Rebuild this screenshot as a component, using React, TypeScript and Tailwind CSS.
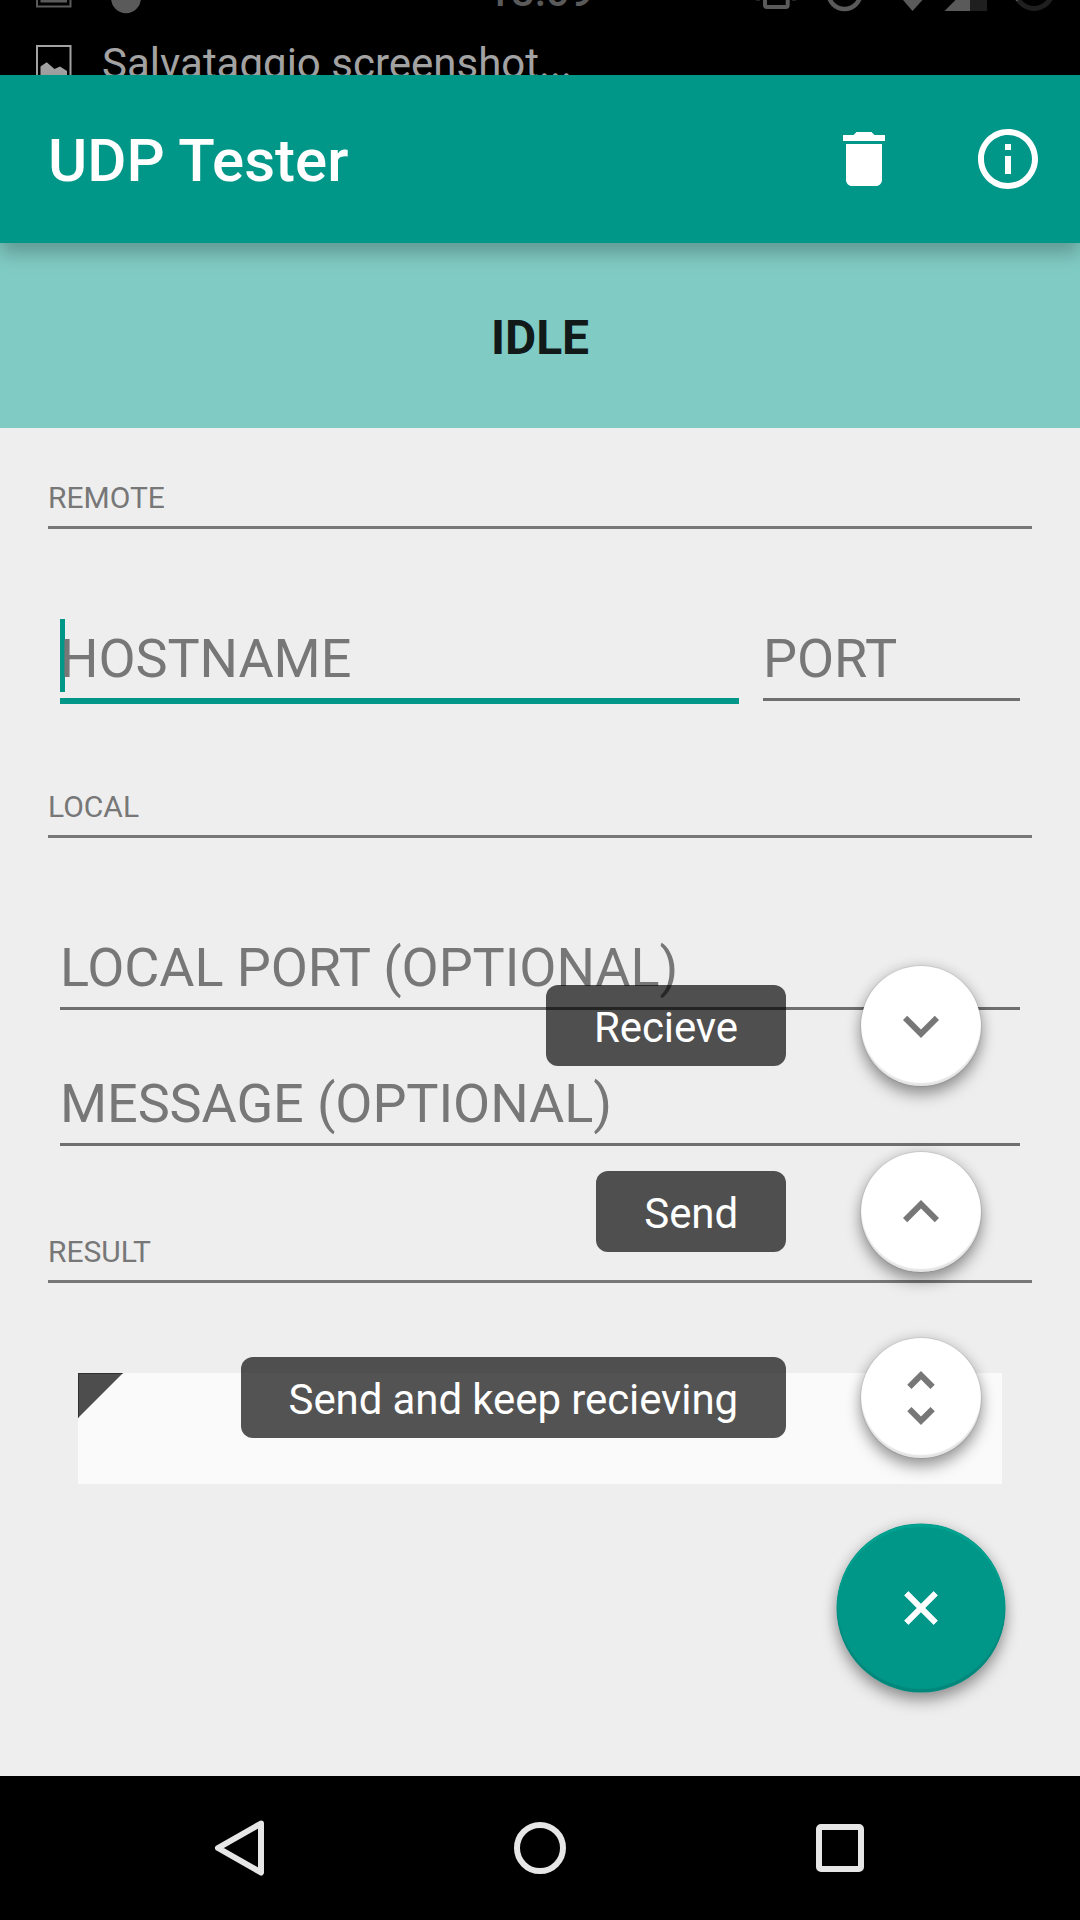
import type { ReactNode } from "react";

function StatusBar() {
  return (
    <div className="relative h-[75px] shrink-0 overflow-hidden bg-black">
      <svg className="absolute inset-0" width="1080" height="75" viewBox="0 0 1080 75">
        <g fill="#5a5a5a">
          <path d="M36 0h2v5.5h31.500V0h2v7.500H36z" />
          <rect x="40.500" y="0" width="26.500" height="2.500" />
          <ellipse cx="126" cy="-2" rx="15" ry="15.300" />
          <rect x="756" y="0" width="4" height="1" opacity="0.4" />
          <rect x="792" y="0" width="4" height="1" opacity="0.4" />
          <path d="M903 0h19.500L912.500 11z" />
          <path d="M944.500 11L955.500 0H970v11z" />
        </g>
        <path d="M765 -6V5a2 2 0 0 0 2 2h18.700a2 2 0 0 0 2 -2V-6" fill="none" stroke="#5a5a5a" strokeWidth="4" />
        <circle cx="844.500" cy="-7" r="16" fill="none" stroke="#5a5a5a" strokeWidth="4.500" />
        <rect x="970" y="0" width="17" height="11" fill="#1f1f1f" />
        <circle cx="1034" cy="-10" r="18.500" fill="none" stroke="#1f1f1f" strokeWidth="5" />
        <path d="M1015.500 0h3l-1.500 1.500z" fill="#5a5a5a" />
        <rect x="37" y="46" width="33.500" height="40" fill="none" stroke="#a3a3a3" strokeWidth="2" />
        <path d="M40.500 66.500L46.700 62.300 54.500 69 60 66.500 67 71V76H40.500z" fill="#a3a3a3" />
      </svg>
      <span className="absolute left-[487px] top-[-33px] text-[42px] leading-[50px] font-medium text-[#5a5a5a]">18:09</span>
      <span className="absolute left-[102px] top-[39px] text-[42px] leading-[50px] whitespace-nowrap text-[#a3a3a3]">
        Salvataggio screenshot...
      </span>
    </div>
  );
}

function MaterialIcon({ d, className }: { d: string; className: string }) {
  return (
    <svg className={className} width="72" height="72" viewBox="0 0 24 24" fill="currentColor">
      <path d={d} />
    </svg>
  );
}

function SectionHeader({ children, className }: { children: ReactNode; className: string }) {
  return (
    <h2 className={`mx-12 border-b-3 border-[#777777] pb-2 text-[30px] leading-10 text-[#777777] ${className}`}>
      {children}
    </h2>
  );
}

function Field({ label, className }: { label: string; className: string }) {
  return (
    <div
      className={`border-[#6f6f6f] text-[54px] leading-[79px] tracking-[-0.1px] whitespace-nowrap text-[#777777] ${className}`}
    >
      {label}
    </div>
  );
}

const actions = [
  { label: "Recieve", icon: "M16.590 8.590L12 13.170 7.410 8.590 6 10l6 6 6-6z" },
  { label: "Send", icon: "M12 8l-6 6 1.410 1.410L12 10.830l4.590 4.580L18 14z" },
  {
    label: "Send and keep recieving",
    icon: "M12 5.830L15.170 9l1.410-1.410L12 3 7.410 7.590 8.830 9 12 5.830zm0 12.340L8.830 15l-1.410 1.410L12 21l4.590-4.590L15.170 15 12 18.170z",
  },
];

function FloatingMenu() {
  return (
    <div className="absolute right-[75px] bottom-[228px] flex flex-col items-end">
      {actions.map((a) => (
        <div key={a.label} className="mb-[66px] flex h-[120px] items-center gap-[75px] pr-6">
          <span className="mb-px flex h-[81px] items-center rounded-[12px] bg-black/67 px-12 text-[42px] leading-[50px] tracking-[-0.100px] whitespace-nowrap text-white">
            <span className="mt-1">{a.label}</span>
          </span>
          <button
            aria-label={a.label}
            className="flex size-[120px] items-center justify-center rounded-full bg-white text-[#777777] shadow-[0_0_0_1px_rgba(0,0,0,0.07),0_9px_15px_rgba(0,0,0,0.34),0_0_14px_rgba(0,0,0,0.14),inset_0_-3px_1px_rgba(0,0,0,0.10)]"
          >
            <MaterialIcon d={a.icon} className="size-[72px]" />
          </button>
        </div>
      ))}
      <button
        aria-label="Close"
        className="flex size-[168px] items-center justify-center rounded-full bg-[#009688] text-white shadow-[0_0_0_0.500px_#009688,0_9px_15px_rgba(0,0,0,0.34),0_0_14px_rgba(0,0,0,0.14),inset_0_-3px_1px_rgba(0,0,0,0.10),inset_0_3px_1px_rgba(0,170,150,0.6)]"
      >
        <svg width="42" height="42" viewBox="0 0 42 42" fill="currentColor" className="rotate-45">
          <path d="M18 0h6v18h18v6H24v18h-6V24H0v-6h18z" />
        </svg>
      </button>
    </div>
  );
}

export default function App() {
  return (
    <div
      className="relative flex h-[1920px] w-[1080px] flex-col overflow-hidden bg-[#eeeeee]"
      style={{ fontFamily: "Roboto, sans-serif" }}
    >
      <StatusBar />
      <header className="relative z-10 flex h-[168px] shrink-0 items-center bg-[#009688] pr-9 pl-12 text-white shadow-[0_10px_18px_rgba(0,0,0,0.25)]">
        <h1 className="mt-1 flex-1 text-[60px] leading-[72px] font-medium">UDP Tester</h1>
        <MaterialIcon
          className="mr-[72px] size-[72px]"
          d="M6 19c0 1.100.9 2 2 2h8c1.100 0 2-.9 2-2V7H6v12zM19 4h-3.500l-1-1h-5l-1 1H5v2h14V4z"
        />
        <MaterialIcon
          className="size-[72px]"
          d="M11 17h2v-6h-2v6zm1-15C6.480 2 2 6.480 2 12s4.480 10 10 10 10-4.480 10-10S17.520 2 12 2zm0 18c-4.410 0-8-3.590-8-8s3.590-8 8-8 8 3.590 8 8-3.590 8-8 8zM11 9h2V7h-2v2z"
        />
      </header>
      <div className="flex h-[185px] shrink-0 items-center justify-center bg-[#80cbc4] pt-1 text-[48px] leading-[56px] font-bold text-[#111a19]">
        IDLE
      </div>
      <main className="h-[1348px] shrink-0">
        <SectionHeader className="mt-[50px]">REMOTE</SectionHeader>
        <div className="mx-[60px] mt-[90px] flex items-start gap-6">
          <div className="relative w-[679px]">
            <span className="absolute top-0 left-0 h-[73px] w-[5px] bg-[#009688]" />
            <Field label="HOSTNAME" className="relative border-b-6 border-[#009688]!" />
          </div>
          <Field label="PORT" className="flex-1 border-b-3" />
        </div>
        <SectionHeader className="mt-[83px]">LOCAL</SectionHeader>
        <Field label="LOCAL PORT (OPTIONAL)" className="mx-[60px] mt-[90px] border-b-3" />
        <Field label="MESSAGE (OPTIONAL)" className="mx-[60px] mt-[54px] border-b-3" />
        <SectionHeader className="mt-[86px]">RESULT</SectionHeader>
        <div className="mx-[78px] mt-[90px] h-[111px] bg-[#fafafa]">
          <svg width="45" height="45" viewBox="0 0 45 45">
            <path d="M0 0h45L0 45z" fill="#4d4d4d" />
            <path d="M0 0h45l-1 1H1v43l-1 1z" fill="#303030" />
          </svg>
        </div>
      </main>
      <nav className="flex h-36 shrink-0 items-center justify-center gap-[228px] bg-black">
        <svg width="72" height="72" viewBox="0 0 72 72" fill="none" stroke="#e6e6e6" strokeWidth="6" strokeLinejoin="round">
          <path d="M57 11.500L14 36l43 24.500z" />
        </svg>
        <svg width="72" height="72" viewBox="0 0 72 72" fill="none" stroke="#e6e6e6" strokeWidth="6">
          <circle cx="36" cy="36" r="23" />
        </svg>
        <svg width="72" height="72" viewBox="0 0 72 72" fill="none" stroke="#e6e6e6" strokeWidth="6">
          <rect x="15" y="15" width="42" height="42" rx="2" />
        </svg>
      </nav>
      <FloatingMenu />
    </div>
  );
}
